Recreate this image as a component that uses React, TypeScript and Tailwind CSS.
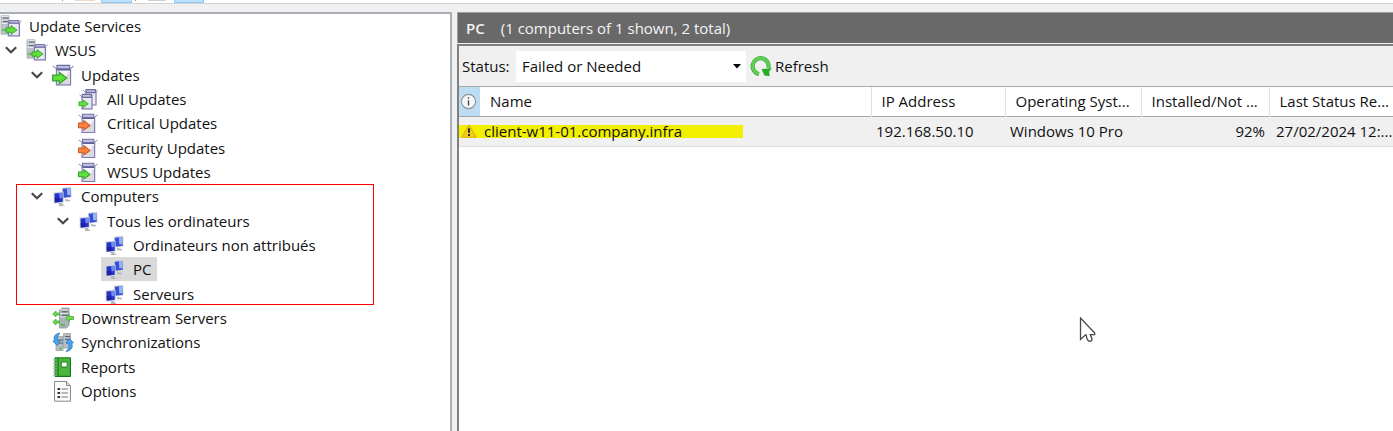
import { useState } from "react";
import type { ReactNode } from "react";

type ArrowColor = "green" | "orange";

function Arrow({ color, x = 0, y = 8, s = 1 }: { color: ArrowColor; x?: number; y?: number; s?: number }) {
  const fill = color === "green" ? "#5fe03c" : "#ff8138";
  const stroke = color === "green" ? "#35a02a" : "#c25a26";
  return (
    <path
      d="M.6 3.4h6V.7l7 5.3-7 5.3V8.6h-6z"
      transform={`translate(${x} ${y}) scale(${s})`}
      fill={fill}
      stroke={stroke}
      strokeWidth="1.1"
    />
  );
}

function Icon({ children }: { children: ReactNode }) {
  return (
    <svg aria-hidden="true" viewBox="0 0 22 22" className="h-[22px] w-[22px] shrink-0">
      {children}
    </svg>
  );
}

function Box() {
  return (
    <>
      <path d="M.8 2l4 3M21.5 2l-3.5 3" stroke="#9a9ab8" strokeWidth="1.1" />
      <path d="M4.5 5.5h14v15.3h-14z" fill="#f5f4f9" stroke="#7d7bb0" strokeWidth="1.3" />
      <path d="M8 20l9.8-13v13z" fill="#d9d9de" />
      <path d="M5 5.6h13" stroke="#5c5a98" strokeWidth="1.6" />
      <path d="M5 1.4h12.6v3.4H5z" fill="#bcbed8" stroke="#6f6da6" strokeWidth="1.2" />
    </>
  );
}

function BoxIcon({ color, small = false }: { color: ArrowColor; small?: boolean }) {
  return (
    <Icon>
      <g transform={small ? "translate(0 1) scale(.9 .93)" : undefined}>
        <Box />
        <Arrow color={color} x={0} y={7.5} s={small ? 0.98 : 1.08} />
      </g>
    </Icon>
  );
}

function AllIcon() {
  return (
    <Icon>
      <path d="M5 2l2 2M19.8 2L18 4" stroke="#9a9ab8" />
      <path d="M8 4h10v13H8z" fill="#eeeef5" stroke="#7d7bb0" strokeWidth="1.2" />
      <path d="M8 1.6h9.5v3H8z" fill="#b9bbd6" stroke="#6f6da6" strokeWidth="1.2" />
      <path d="M1.5 6.5l2 2M15.5 6.5l-1.7 2" stroke="#9a9ab8" />
      <path d="M4 9h10v11.8H4z" fill="#e9e9ef" stroke="#7d7bb0" strokeWidth="1.2" />
      <path d="M4.2 6.4h9.2v3H4.2z" fill="#c1c3da" stroke="#6f6da6" strokeWidth="1.2" />
      <Arrow color="green" x={0.5} y={11.5} s={0.72} />
    </Icon>
  );
}

function ServerIcon() {
  return (
    <Icon>
      <path d="M1 .8h8v18.4H1z" fill="#bcc1c6" stroke="#a3abb2" strokeWidth=".8" />
      <path d="M3 3h5.5M3 6.5h5.5" stroke="#59656e" strokeWidth="1.2" />
      <path d="M1.5 1.5h7M1.5 5h7M1.5 8.5h7" stroke="#e3e7ea" />
      <path d="M2 15h4" stroke="#43c234" strokeWidth="1.5" />
      <path d="M8.4 8h11v12.8h-11z" fill="#e9e9f1" stroke="#7d7bb0" strokeWidth="1.3" />
      <path d="M9 5.6h10V8H9z" fill="#c1c3da" stroke="#6f6da6" />
      <path d="M21.5 5.5l-2 2.3M7 5.5l1.5 2" stroke="#9a9ab8" />
      <Arrow color="green" x={5.5} y={10} s={0.84} />
    </Icon>
  );
}

function ComputersIcon() {
  return (
    <Icon>
      <path d="M13 14l5 1v1.6l-5-.4zM6 18l4-.5.6 2 2.4.8-3 1-4-.6 1.5-.9z" fill="#b3b6b9" />
      <path d="M9.8 2.8l9.4-1 .3 10.8-9.4 1.2z" fill="#cfd3e2" />
      <path d="M10.8 3.8l7.6-.8.3 8.8-7.6.9z" fill="#3450d2" />
      <path d="M14.8 3.4l3.6-.4.2 7-3.2.4z" fill="#9ab2f4" />
      <path d="M1.5 7.6l10-1 .3 11-10 1z" fill="#cfd3e2" />
      <path d="M2.5 8.5l8-.8.3 9-8 .8z" fill="#2434c6" />
      <path d="M7 8.1l3.5-.3.2 5-3 .8z" fill="#6e8bf1" />
      <path d="M2.7 13l4.5-.2.4 4.2-4.8.5z" fill="#1a24a4" />
    </Icon>
  );
}

function DownstreamIcon() {
  return (
    <Icon>
      <path d="M7.5 3l3-2H17v17.5L14.5 21h-7z" fill="#a9b0b6" stroke="#8a949c" strokeWidth=".8" />
      <path d="M8 3h8M8 6.5h8M8 10h8" stroke="#e6eaed" />
      <path d="M10 4.8h6M10 8.3h6" stroke="#4d5860" strokeWidth="1.1" />
      <path d="M9 18h4" stroke="#43c234" strokeWidth="1.6" />
      <g fill="#6fdd4a" stroke="#45a835" strokeWidth=".8">
        <path d="M.7 7L4 4v2h3.4v2H4v2z" />
        <path d="M.7 15L4 12v2h3.4v2H4v2z" />
        <path d="M13.5 11l4-3.8v2.3h4v3h-4v2.3z" />
      </g>
    </Icon>
  );
}

function SyncIcon() {
  return (
    <Icon>
      <path d="M4 5.5h7v14H4zM11.5 2.5h7V17h-7z" fill="#b7bdc4" stroke="#98a1aa" strokeWidth=".8" />
      <path d="M7 9h4M7 12h4M13 5.5h5M13 8.5h5" stroke="#56626c" />
      <path d="M7 17.5h3" stroke="#43c234" strokeWidth="1.5" />
      <path d="M8 2C2.5 3 1 6 2.8 10H.8l4.5 4.5L8.5 9.5H6C4.7 6.5 5.8 4.5 8 2z" fill="#4ba3ea" stroke="#2f74be" strokeWidth=".8" />
      <path d="M14 20.5c6-1 7.3-5 5.5-8.5h2L17.2 7.3 14 12.3h2.5c1.4 3 .2 5.5-2.5 8.2z" fill="#4ba3ea" stroke="#2f74be" strokeWidth=".8" />
    </Icon>
  );
}

function ReportIcon() {
  return (
    <Icon>
      <path d="M3 1.8h15.5v18.7H3z" fill="#36a52f" stroke="#16781c" />
      <path d="M7 2.6h10.8v16.6H7z" fill="#4ab63c" />
      <path d="M6.3 2.5v17.5" stroke="#1f8422" />
      <path d="M9.2 6h6v5h-6z" fill="#fff" stroke="#207d21" />
      <path d="M.8 4h4M.8 7h4M.8 10h4M.8 13h4M.8 16h4M.8 19h4" stroke="#a3b5aa" strokeWidth="1.1" />
    </Icon>
  );
}

function OptionsIcon() {
  return (
    <Icon>
      <path d="M2.5 1.5h12l4 4v15.7h-16z" fill="#fbfbfb" stroke="#8a8a8a" />
      <path d="M14.5 1.5v4h4" fill="#ddd" stroke="#8a8a8a" />
      <path d="M5.5 9h2.6M5.5 13h2.6M5.5 17h2.6" stroke="#333" strokeWidth="2.2" />
      <path d="M9.5 9h6.5M9.5 13h6.5M9.5 17h6.5" stroke="#777" />
    </Icon>
  );
}

type Node = { level: number; label: string; icon: ReactNode; open?: boolean };

const nodes: Node[] = [
  { level: 0, label: "Update Services", icon: <ServerIcon /> },
  { level: 1, label: "WSUS", icon: <ServerIcon />, open: true },
  { level: 2, label: "Updates", icon: <BoxIcon color="green" />, open: true },
  { level: 3, label: "All Updates", icon: <AllIcon /> },
  { level: 3, label: "Critical Updates", icon: <BoxIcon color="orange" small /> },
  { level: 3, label: "Security Updates", icon: <BoxIcon color="orange" small /> },
  { level: 3, label: "WSUS Updates", icon: <BoxIcon color="green" small /> },
  { level: 2, label: "Computers", icon: <ComputersIcon />, open: true },
  { level: 3, label: "Tous les ordinateurs", icon: <ComputersIcon />, open: true },
  { level: 4, label: "Ordinateurs non attribués", icon: <ComputersIcon /> },
  { level: 4, label: "PC", icon: <ComputersIcon /> },
  { level: 4, label: "Serveurs", icon: <ComputersIcon /> },
  { level: 2, label: "Downstream Servers", icon: <DownstreamIcon /> },
  { level: 2, label: "Synchronizations", icon: <SyncIcon /> },
  { level: 2, label: "Reports", icon: <ReportIcon /> },
  { level: 2, label: "Options", icon: <OptionsIcon /> },
];

const indents = ["pl-0", "pl-0", "pl-[26px]", "pl-[52px]", "pl-[78px]"];

function Tree() {
  const [selected, setSelected] = useState("PC");
  return (
    <nav aria-label="Console tree" className="relative w-[452px] shrink-0 border-t-2 border-r-2 border-[#a9aeb5] bg-white">
      <ul role="tree" className="grid h-[389px] grid-rows-[repeat(16,minmax(0,1fr))]">
        {nodes.map((n) => (
          <li
            key={n.label}
            role="treeitem"
            aria-level={n.level + 1}
            aria-expanded={n.open}
            aria-selected={n.label === selected}
            className={`flex items-center ${indents[n.level]}`}
          >
            {n.level > 0 && (
              <span className="flex w-[23px] shrink-0 pl-1">
                {n.open && (
                  <button type="button" aria-label={`Collapse ${n.label}`}>
                    <svg viewBox="0 0 14 8" className="h-2 w-3.5">
                      <path d="M1.8 1.2L7 6.2l5.2-5" fill="none" stroke="#484848" strokeWidth="2.2" />
                    </svg>
                  </button>
                )}
              </span>
            )}
            <button
              type="button"
              onClick={() => setSelected(n.label)}
              className={`flex h-full items-center gap-[7px] pr-1.5 whitespace-nowrap ${n.level > 0 ? "pl-[3px]" : "pl-0"} ${n.label === selected ? "bg-[#d9d9d9]" : ""}`}
            >
              {n.icon}
              {n.label}
            </button>
          </li>
        ))}
      </ul>
      <div className="pointer-events-none absolute top-[170px] left-4 h-[121px] w-[358px] border border-[#f00]" />
    </nav>
  );
}

function Toolbar() {
  return (
    <div aria-hidden="true" className="flex h-1 shrink-0 border-b border-[#d5d5d5] bg-white">
      <span className="ml-[62px] h-px w-px bg-[#999]" />
      <span className="ml-3 h-px w-5 bg-[#ecdcc4]" />
      <span className="ml-1.5 h-[3px] w-[31px] border border-t-0 border-[#90c8f6] bg-[#bfe0fa]" />
      <span className="ml-[3px] h-px w-px bg-[#999]" />
      <span className="ml-3 h-px w-[18px] bg-[#cfcddc]" />
      <span className="ml-2 h-[3px] w-[30px] border border-t-0 border-[#90c8f6] bg-[#bfe0fa]" />
    </div>
  );
}

const th = "border-r border-[#e0e0e0] pl-2.5 text-left font-normal whitespace-nowrap";
const td = "pl-[5px] whitespace-nowrap";

function ComputerTable() {
  return (
    <table className="w-full table-fixed border-collapse">
      <colgroup>
        <col className="w-[21px]" />
        <col />
        <col className="w-[134px]" />
        <col className="w-[136px]" />
        <col className="w-[128px]" />
        <col className="w-[124px]" />
      </colgroup>
      <thead>
        <tr className="h-[29px] border-b border-[#a8a8a8] bg-white">
          <th aria-label="Information" className="bg-[#bcdcf4] p-0">
            <svg viewBox="0 0 18 18" className="ml-px h-[17px] w-[17px]">
              <circle cx="9" cy="9" r="7.5" fill="#f7f7f7" stroke="#8c959c" strokeWidth="1.2" />
              <path d="M9 7.6v5.6M9 4.6v1.6" stroke="#444" strokeWidth="1.4" />
            </svg>
          </th>
          <th className={th}>Name</th>
          <th className={th}>IP Address</th>
          <th className={th}>Operating Syst...</th>
          <th className={th}>Installed/Not ...</th>
          <th className="pl-2.5 text-left font-normal whitespace-nowrap">Last Status Re...</th>
        </tr>
      </thead>
      <tbody>
        <tr className="h-[30px] border-b border-[#dedede] bg-[#f0f0f0]">
          <td colSpan={2} className="p-0">
            <div className="flex h-[13px] w-[284px] items-center bg-[#f2ef00]">
              <svg viewBox="0 0 18 16" className="ml-0.5 h-4 w-4 shrink-0" role="img" aria-label="Warning">
                <path d="M9 1.2L17 15H1z" fill="#f2cd19" stroke="#dcae1c" strokeWidth="1.2" strokeLinejoin="round" />
                <path d="M9 5v5M9 11.5v2" stroke="#1b1b1b" strokeWidth="2" />
              </svg>
              <span className="ml-[7px] whitespace-nowrap">client-w11-01.company.infra</span>
            </div>
          </td>
          <td className={td}>192.168.50.10</td>
          <td className={td}>Windows 10 Pro</td>
          <td className="pr-1 text-right">92%</td>
          <td className="pl-[7px] whitespace-nowrap">27/02/2024 12:...</td>
        </tr>
      </tbody>
    </table>
  );
}

function Details() {
  return (
    <main className="flex min-w-0 flex-1 flex-col">
      <header className="flex h-[31px] shrink-0 items-center gap-4 border-t border-l border-[#a0a0a0] bg-[#696969] pl-2 text-[#f4f4f4]">
        <h1 className="font-semibold">PC</h1>
        <p>(1 computers of 1 shown, 2 total)</p>
      </header>
      <section className="mt-px flex flex-1 flex-col border-t-2 border-l-2 border-[#808080] bg-white">
        <div className="flex h-[41px] shrink-0 items-center border-b border-[#a8a8a8] bg-[#f0f0f0] pl-[3px]">
          <label htmlFor="status" className="w-[54px] shrink-0">
            Status:
          </label>
          <div className="relative">
            <select id="status" className="h-[31px] w-[230px] appearance-none bg-white pl-1.5 outline-none">
              <option>Failed or Needed</option>
            </select>
            <svg aria-hidden="true" viewBox="0 0 8 5" className="pointer-events-none absolute top-[13px] right-[5px] h-[5px] w-2">
              <path d="M0 0h8L4 4.5z" fill="#000" />
            </svg>
          </div>
          <button type="button" className="ml-1 flex items-center gap-[3px]">
            <svg aria-hidden="true" viewBox="0 0 22 22" className="h-[22px] w-[22px]">
              <path d="M9 19A8 8 0 1 1 18.4 13" fill="none" stroke="#3fae3b" strokeWidth="4.2" />
              <path d="M9 19A8 8 0 1 1 18.4 13" fill="none" stroke="#62cf55" strokeWidth="2.6" />
              <path d="M11.6 14l10.2-.8-2.6 3.4.4 4.6-5.2-.6z" fill="#27ac27" />
            </svg>
            Refresh
          </button>
        </div>
        <ComputerTable />
      </section>
    </main>
  );
}

export default function App() {
  return (
    <div className="relative flex min-h-screen flex-col bg-[#f0f0f0] font-['Open_Sans','Noto_Sans',sans-serif] text-[15px] leading-5 text-[#111]">
      <Toolbar />
      <div className="mt-2 flex flex-1 gap-[5px]">
        <Tree />
        <Details />
      </div>
      <svg aria-hidden="true" viewBox="0 0 18 28" className="pointer-events-none absolute top-[317px] left-[1079px] h-7 w-[18px]">
        <path d="M1.5 1v21.5l5-4.7h.6c.5 3 1.5 6 3.2 6.4 1.8.3 3-.8 2.6-2.4l-1.6-4.2h4.4v-1.6z" fill="#fff" stroke="#484852" strokeWidth="1.3" />
      </svg>
    </div>
  );
}
